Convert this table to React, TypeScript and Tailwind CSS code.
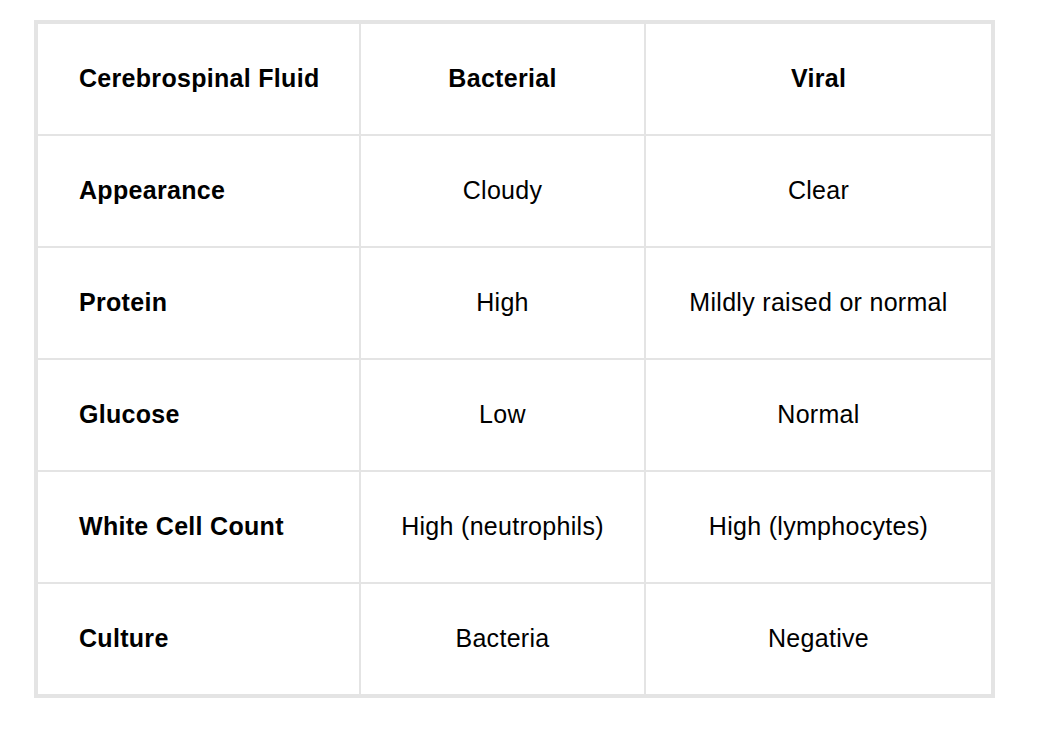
import { Fragment } from 'react';

const rows: [string, string, string][] = [
  ['Appearance', 'Cloudy', 'Clear'],
  ['Protein', 'High', 'Mildly raised or normal'],
  ['Glucose', 'Low', 'Normal'],
  ['White Cell Count', 'High (neutrophils)', 'High (lymphocytes)'],
  ['Culture', 'Bacteria', 'Negative'],
];

function Cell({ children, first, bold }: { children: string; first?: boolean; bold?: boolean }) {
  return (
    <div
      className={
        'bg-white h-[110px] flex items-center ' +
        (first ? 'pl-[41px] justify-start ' : 'justify-center ') +
        (bold ? 'font-bold' : 'font-normal')
      }
    >
      {children}
    </div>
  );
}

export default function App() {
  return (
    <div
      className="min-h-[736px] bg-white pt-[20px] pl-[34px] text-black text-[25px] tracking-[0.3px]"
      style={{ fontFamily: '"Liberation Sans", Arial, sans-serif' }}
    >
      <div className="w-[961px] border-4 border-[#e4e4e4] bg-[#e4e4e4]">
        <div className="grid grid-cols-[321px_283px_345px] gap-[2px]">
          {/* header */}
          <Cell first bold>Cerebrospinal Fluid</Cell>
          <Cell bold>Bacterial</Cell>
          <Cell bold>Viral</Cell>

          {rows.map(([label, bact, viral]) => (
            <Fragment key={label}>
              <Cell first bold>{label}</Cell>
              <Cell>{bact}</Cell>
              <Cell>{viral}</Cell>
            </Fragment>
          ))}
        </div>
      </div>
    </div>
  );
}
